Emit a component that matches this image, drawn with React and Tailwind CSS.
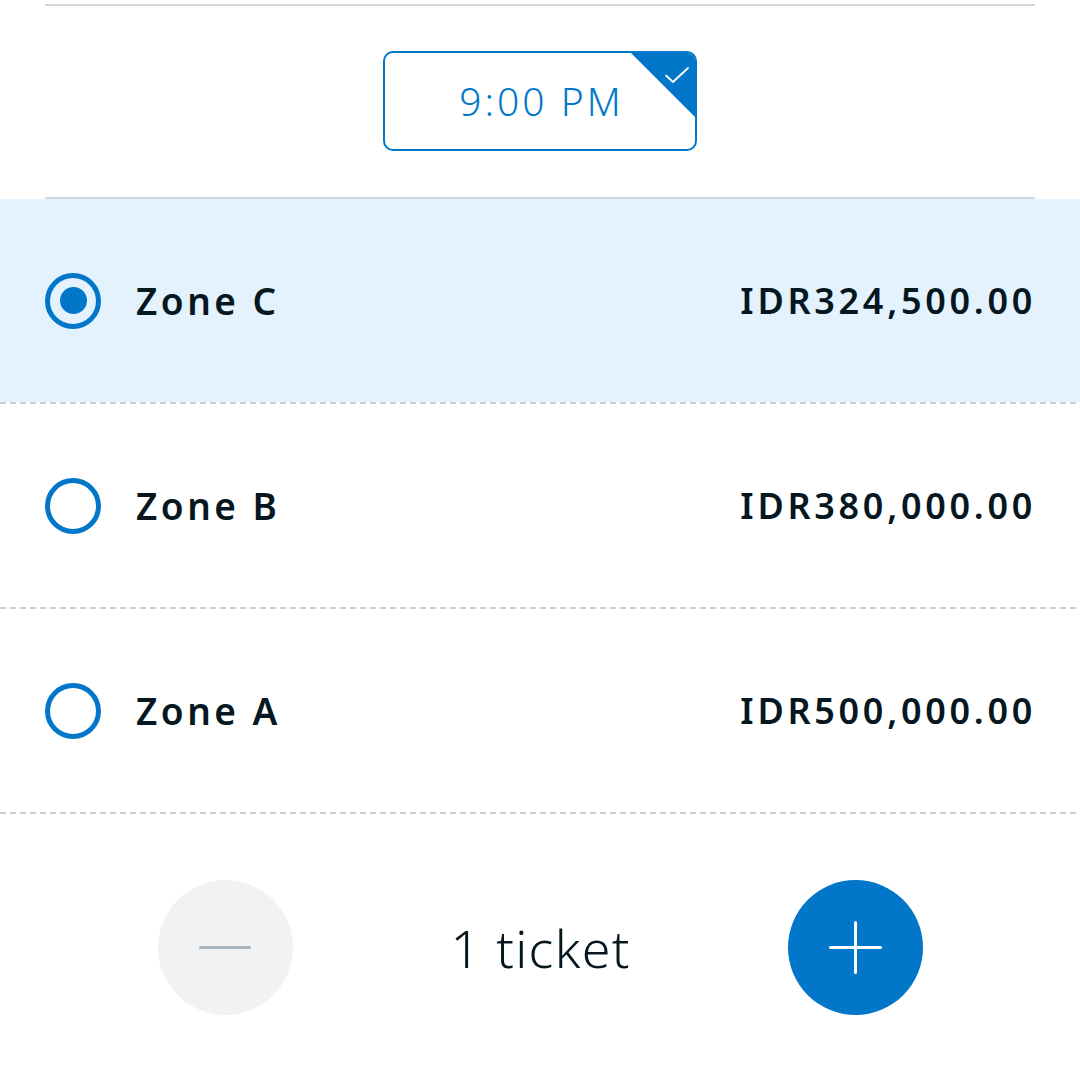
import { useState } from 'react'

const zones = [
  { id: 'c', name: 'Zone C', price: 'IDR324,500.00' },
  { id: 'b', name: 'Zone B', price: 'IDR380,000.00' },
  { id: 'a', name: 'Zone A', price: 'IDR500,000.00' },
]

function Dashed() {
  return <div className="h-[2px] w-full bg-[repeating-linear-gradient(90deg,#c9cfd4_0_6px,transparent_6px_10px)]" />
}

function Radio({ checked }) {
  return (
    <span className="flex h-[56px] w-[56px] shrink-0 items-center justify-center rounded-full border-[5px] border-[#0277c9]">
      {checked && <span className="h-[27px] w-[27px] rounded-full bg-[#0277c9]" />}
    </span>
  )
}

export default function App() {
  const [zone, setZone] = useState('c')
  const [count, setCount] = useState(1)

  return (
    <div className="min-h-[1080px] bg-white text-[#07171f] font-['Noto_Sans',sans-serif]">
      <div className="mx-[45px] mt-[4px] h-[2px] bg-[#d3d7db]" />

      <div className="flex justify-center pt-[45px] pb-[46px]">
        <button className="relative flex h-[100px] w-[314px] items-center justify-center overflow-hidden rounded-[10px] border-2 border-[#0277c9] bg-white">
          <span className="pl-[3px] text-[39px] font-light tracking-[3px] text-[#0277c9]">9:00 PM</span>
          <span className="absolute right-0 top-0 h-[64px] w-[64px] bg-[#0277c9] [clip-path:polygon(0_0,100%_0,100%_100%)]">
            <svg className="absolute right-[5px] top-[13px]" width="26" height="18" viewBox="0 0 26 18" fill="none">
              <path d="M2 9.5 L9 16 L24 2" stroke="white" strokeWidth="1.8" strokeLinecap="round" strokeLinejoin="round" />
            </svg>
          </span>
        </button>
      </div>

      <div className="mx-[45px] h-[2px] bg-[#d3d7db]" />

      {zones.map((z) => (
        <div key={z.id}>
          <div
            onClick={() => setZone(z.id)}
            className={`flex h-[203px] cursor-pointer items-center pl-[45px] pr-[44px] ${zone === z.id ? 'bg-[#e3f2fd]' : 'bg-white'}`}
          >
            <Radio checked={zone === z.id} />
            <span className="ml-[35px] flex-1 text-[37px] font-semibold tracking-[3.5px]">{z.name}</span>
            <span className="text-[36px] font-semibold tracking-[3.7px]">{z.price}</span>
          </div>
          <Dashed />
        </div>
      ))}

      <div className="flex items-center justify-center pt-[66px]">
        <button
          onClick={() => setCount((c) => Math.max(1, c - 1))}
          className="flex h-[135px] w-[135px] items-center justify-center rounded-full bg-[#f0f2f3]"
        >
          <span className="h-[3px] w-[52px] rounded-full bg-[#a9b5bf]" />
        </button>
        <span className="w-[495px] pl-[1px] text-center text-[52px] font-light tracking-[1.3px]">
          {count} {count === 1 ? 'ticket' : 'tickets'}
        </span>
        <button
          onClick={() => setCount((c) => c + 1)}
          className="relative flex h-[135px] w-[135px] items-center justify-center rounded-full bg-[#0277c9]"
        >
          <span className="absolute h-[3px] w-[53px] rounded-full bg-white" />
          <span className="absolute h-[53px] w-[3px] rounded-full bg-white" />
        </button>
      </div>
    </div>
  )
}
